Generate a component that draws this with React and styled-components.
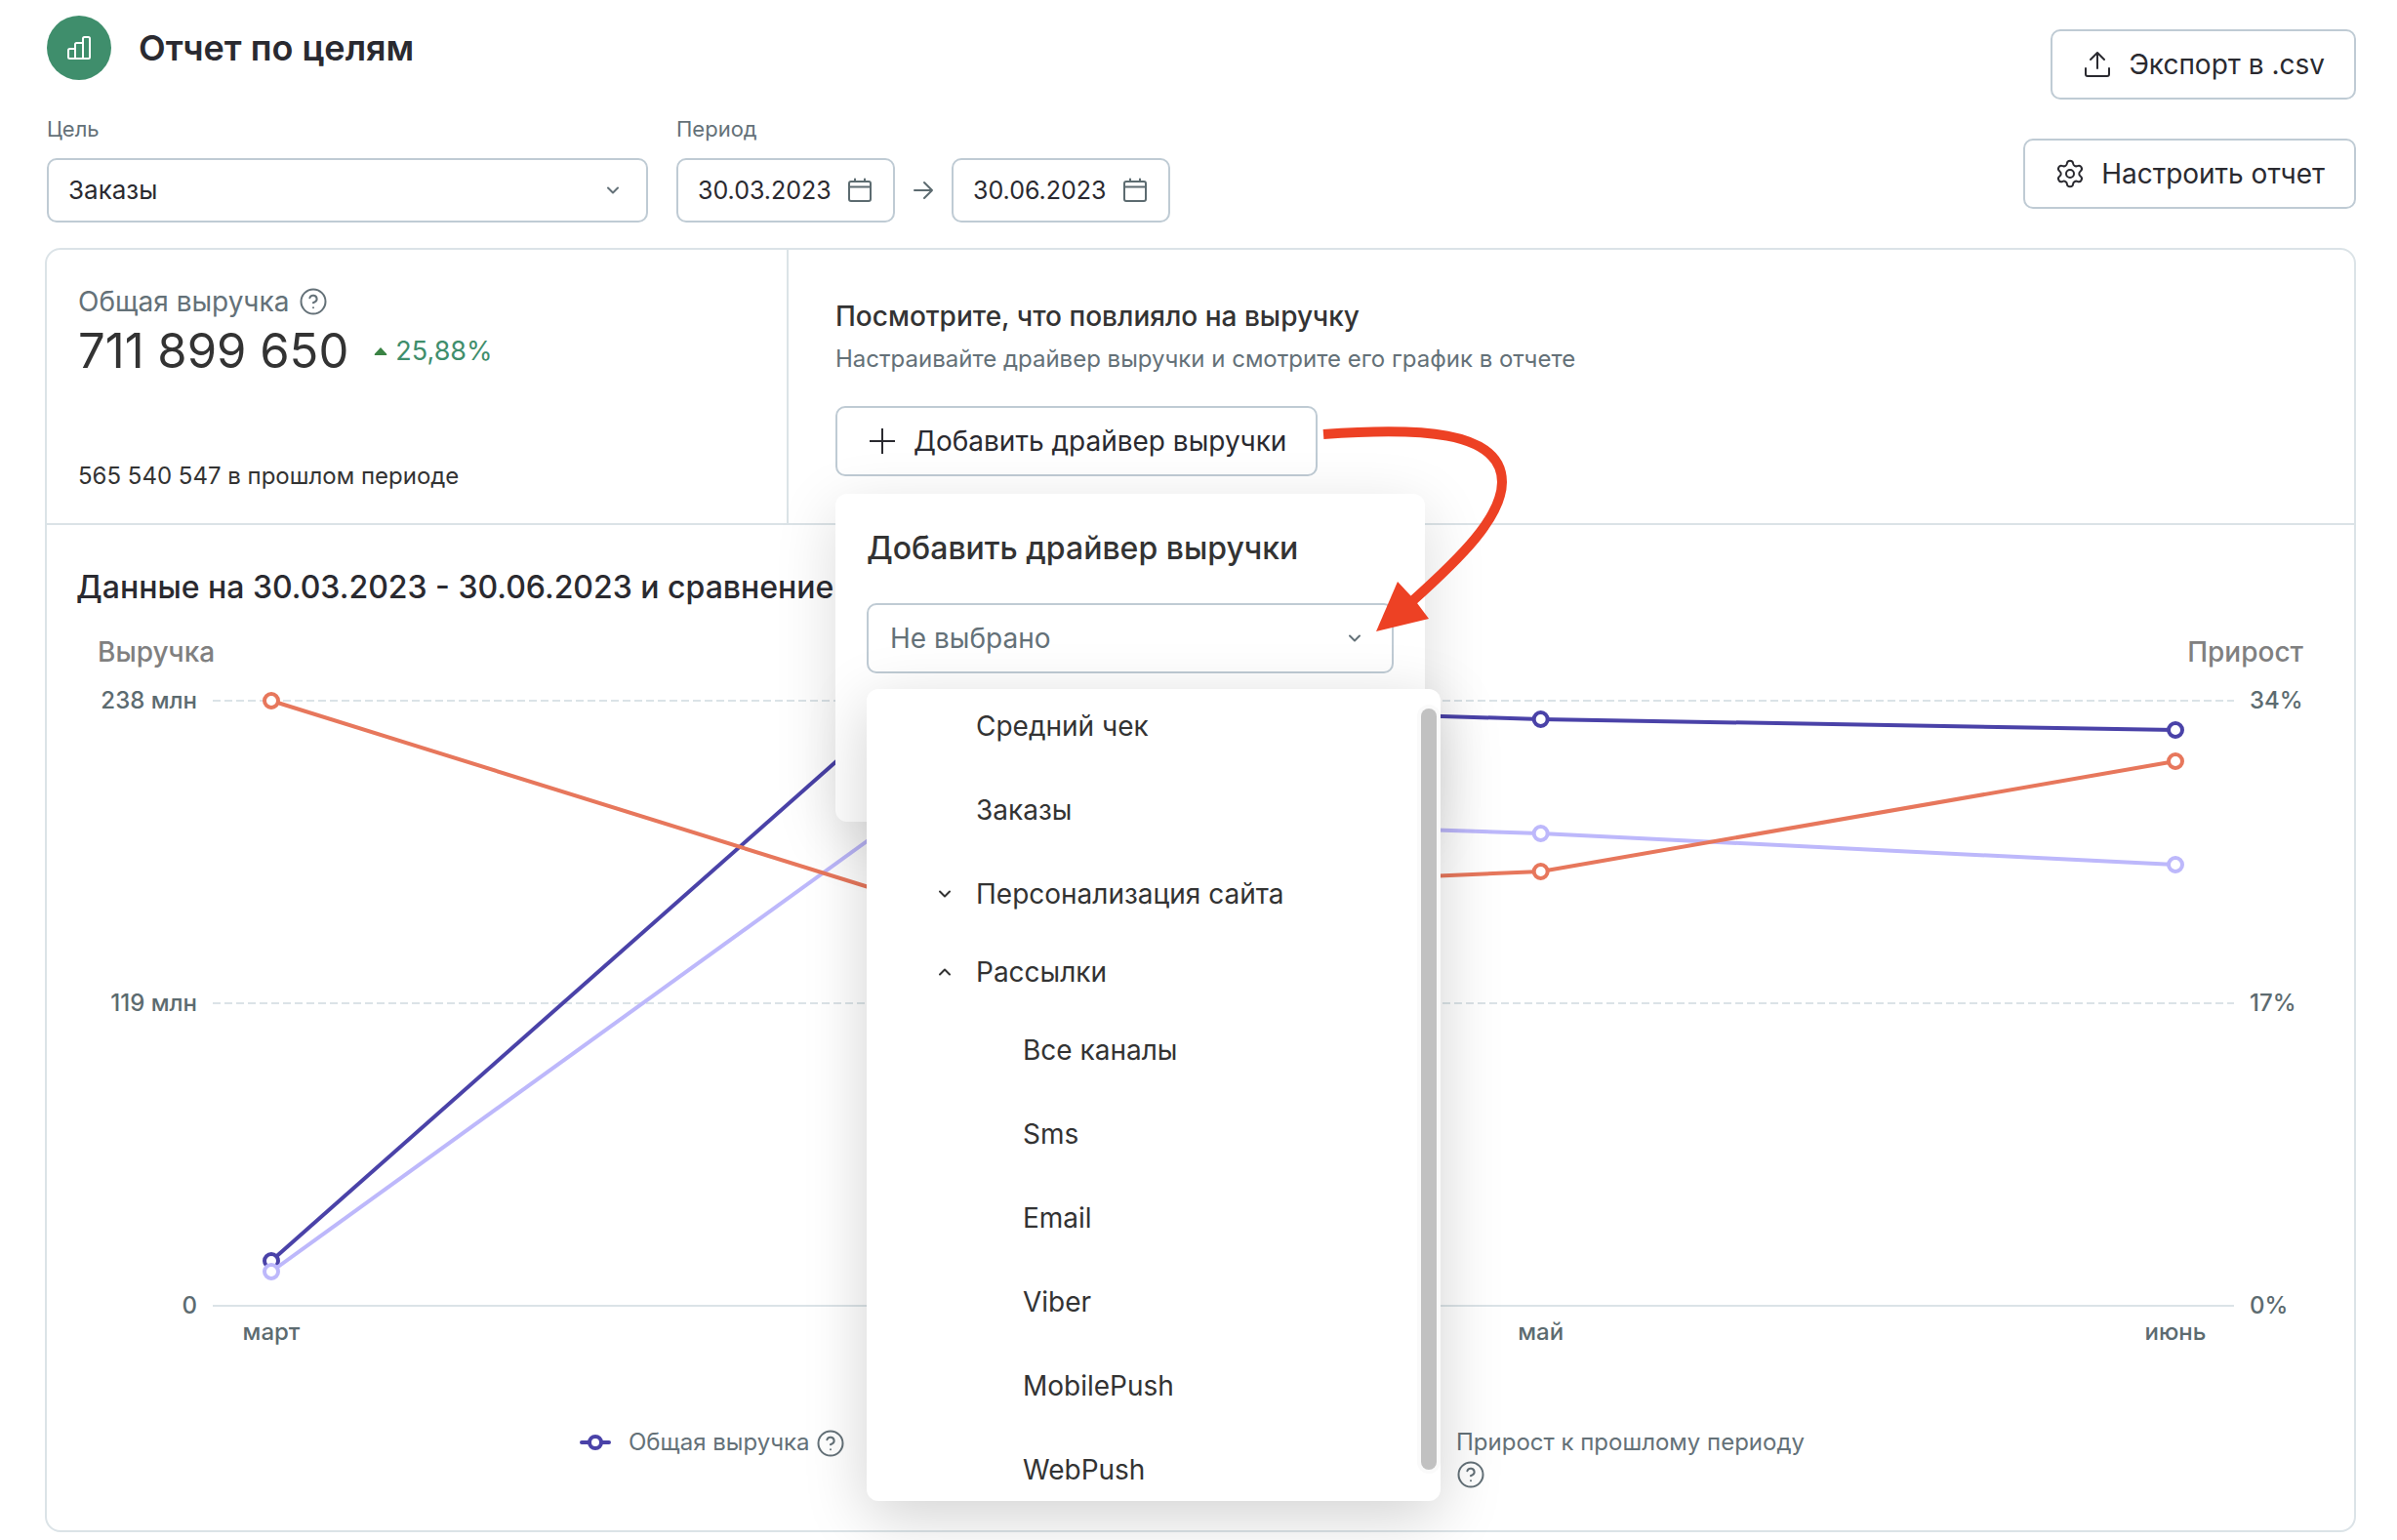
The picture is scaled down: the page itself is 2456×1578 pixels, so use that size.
import React, { useState } from 'react'
import styled, { createGlobalStyle } from 'styled-components'
import { CircleHelp, Settings } from 'lucide-react'

// an empty label keeps the slot of a month that the open menu covers
const months = ['март', '', 'май', 'июнь']

// y positions inside the 650px plot, 15px is the top grid line
const series = [
  { name: 'revenue', color: '#4a42a8', points: [589, 14, 34, 45] },
  { name: 'previous', color: '#bdb8fb', points: [600, 130, 151, 183] },
  { name: 'growth', color: '#e7775c', points: [15, 218, 190, 77] },
]

const drivers = [
  { label: 'Средний чек' },
  { label: 'Заказы' },
  { label: 'Персонализация сайта', group: true },
  { label: 'Рассылки', group: true, open: true },
  { label: 'Все каналы', nested: true },
  { label: 'Sms', nested: true },
  { label: 'Email', nested: true },
  { label: 'Viber', nested: true },
  { label: 'MobilePush', nested: true },
  { label: 'WebPush', nested: true },
]

const percent = (i) => `${(i / (months.length - 1)) * 100}%`

const Chevron = ({ up }) => (
  <svg width="16" height="16" viewBox="0 0 16 16" fill="none" stroke="currentColor" strokeWidth="2" strokeLinecap="round" strokeLinejoin="round" aria-hidden="true">
    <path d={up ? 'M3 10.5l5-5 5 5' : 'M3 5.5l5 5 5-5'} />
  </svg>
)

const CalendarIcon = () => (
  <svg width="28" height="28" viewBox="0 0 28 28" fill="none" stroke="currentColor" strokeWidth="2" strokeLinecap="round" aria-hidden="true">
    <rect x="3" y="5" width="22" height="20" rx="2" />
    <path d="M3 10.5h22M9 2.5v2.5M19 2.5v2.5" />
  </svg>
)

const UploadIcon = () => (
  <svg width="32" height="32" viewBox="0 0 32 32" fill="none" stroke="currentColor" strokeWidth="2" strokeLinecap="round" strokeLinejoin="round" aria-hidden="true">
    <path d="M16 20V4M9 11l7-7 7 7M4 20v6a2 2 0 0 0 2 2h20a2 2 0 0 0 2-2v-6" />
  </svg>
)

const PlusIcon = () => (
  <svg width="32" height="32" viewBox="0 0 32 32" fill="none" stroke="currentColor" strokeWidth="2" aria-hidden="true">
    <path d="M16 3v26M3 16h26" />
  </svg>
)

const ArrowRightIcon = () => (
  <svg width="22" height="22" viewBox="0 0 22 22" fill="none" stroke="currentColor" strokeWidth="2" strokeLinecap="round" strokeLinejoin="round" aria-hidden="true">
    <path d="M2 11h18M12 3l8 8-8 8" />
  </svg>
)

const BarsIcon = () => (
  <svg width="26" height="26" viewBox="0 0 26 26" fill="none" stroke="#fff" strokeWidth="2" strokeLinejoin="round" aria-hidden="true">
    <path d="M9 24H3.500a1.500 1.500 0 0 1-1.500-1.500V15.500A1.500 1.500 0 0 1 3.500 14H9zM9 24V9.500A1.500 1.500 0 0 1 10.500 8H17v16zM17 24V3.500A1.500 1.500 0 0 1 18.500 2h4A1.500 1.500 0 0 1 24 3.500v19a1.500 1.500 0 0 1-1.500 1.500z" />
  </svg>
)

const Help = () => <HelpIcon size={30} strokeWidth={2} absoluteStrokeWidth />

const Chart = () => (
  <Plot>
    <PlotSvg height="650">
      <line x1="0" x2="100%" y1="15" y2="15" stroke="#dbe3e7" strokeWidth="2" strokeDasharray="8 4" />
      <line x1="0" x2="100%" y1="325" y2="325" stroke="#dbe3e7" strokeWidth="2" strokeDasharray="8 4" />
      <line x1="0" x2="100%" y1="635" y2="635" stroke="#dbe3e7" strokeWidth="2" />
    </PlotSvg>
    <Lines>
      <PlotSvg height="650">
        {series.map(({ name, color, points }) => (
          <g key={name} stroke={color}>
            {points.slice(1).map((y, i) => (
              <line key={i} x1={percent(i)} y1={points[i]} x2={percent(i + 1)} y2={y} strokeWidth="4" />
            ))}
            {points.map((y, i) => (
              <circle key={i} cx={percent(i)} cy={y} r="7" fill="#fff" strokeWidth="4" />
            ))}
          </g>
        ))}
      </PlotSvg>
    </Lines>
    <Months>
      {months.map((month, i) => (
        <li key={i}>{month}</li>
      ))}
    </Months>
  </Plot>
)

const LegendItem = ({ color, children }) => (
  <LegendEntry>
    <svg width="32" height="32" viewBox="0 0 32 32" fill="#fff" stroke={color} aria-hidden="true">
      <path d="M2 16h28" strokeWidth="4" strokeLinecap="round" />
      <circle cx="16" cy="16" r="6" strokeWidth="4" />
    </svg>
    {children && (
      <span>
        {children} <Help />
      </span>
    )}
  </LegendEntry>
)

const DriverPicker = () => (
  <Driver>
    <Button type="button">
      <PlusIcon />
      Добавить драйвер выручки
    </Button>
    <Popover>
      <PopoverTitle id="driver-title">Добавить драйвер выручки</PopoverTitle>
      <SelectBox $large>
        <select aria-labelledby="driver-title" defaultValue="">
          <option value="">Не выбрано</option>
        </select>
        <Chevron />
        <Menu>
          <MenuList>
            {drivers.map(({ label, group, open, nested }) => (
              <MenuItem key={label} type="button" $group={group} $nested={nested}>
                {group && <Chevron up={open} />}
                <span>{label}</span>
              </MenuItem>
            ))}
          </MenuList>
          <Thumb />
        </Menu>
      </SelectBox>
    </Popover>
    <Pointer width="200" height="225" viewBox="0 0 200 225" aria-hidden="true">
      <path d="M6 15C100 8 189 10 189 64C189 100 146 142 97 186" fill="none" stroke="#ed4124" strokeWidth="10" />
      <path d="M60 217L82 166L96 181L102 188L114 204Z" fill="#ed4124" />
    </Pointer>
  </Driver>
)

const App = () => {
  const [from, setFrom] = useState('30.03.2023')
  const [to, setTo] = useState('30.06.2023')

  return (
    <Page>
      <GlobalStyle />
      <Header>
        <div>
          <TitleRow>
            <Badge>
              <BarsIcon />
            </Badge>
            <h1>Отчет по целям</h1>
          </TitleRow>
          <Filters>
            <div>
              <Label htmlFor="goal">Цель</Label>
              <SelectBox $goal>
                <select id="goal">
                  <option>Заказы</option>
                </select>
                <Chevron />
              </SelectBox>
            </div>
            <div>
              <Label htmlFor="from">Период</Label>
              <Period>
                <DateBox>
                  <input id="from" value={from} onChange={(e) => setFrom(e.target.value)} />
                  <CalendarIcon />
                </DateBox>
                <ArrowRightIcon />
                <DateBox>
                  <input aria-label="Конец периода" value={to} onChange={(e) => setTo(e.target.value)} />
                  <CalendarIcon />
                </DateBox>
              </Period>
            </div>
          </Filters>
        </div>
        <Actions>
          <Button type="button">
            <UploadIcon />
            Экспорт в .csv
          </Button>
          <Button type="button">
            <Settings size={32} strokeWidth={2} absoluteStrokeWidth />
            Настроить отчет
          </Button>
        </Actions>
      </Header>

      <Card>
        <Summary>
          <Metric>
            <div>
              <MetricName>
                Общая выручка <Help />
              </MetricName>
              <MetricValue>
                <strong>711 899 650</strong>
                <Growth>
                  <svg width="14" height="8" viewBox="0 0 14 8" fill="#3a8344" aria-hidden="true">
                    <path d="M7 0l6 6.500q1 1.500-1 1.500H2q-2 0-1-1.500z" />
                  </svg>
                  25,88%
                </Growth>
              </MetricValue>
            </div>
            <p>565 540 547 в прошлом периоде</p>
          </Metric>
          <Promo>
            <h2>Посмотрите, что повлияло на выручку</h2>
            <p>Настраивайте драйвер выручки и смотрите его график в отчете</p>
            <DriverPicker />
          </Promo>
        </Summary>

        <ChartSection>
          <ChartTitle>Данные на 30.03.2023 - 30.06.2023 и сравнение</ChartTitle>
          <AxisTitles>
            <span>Выручка</span>
            <span>Прирост</span>
          </AxisTitles>
          <ChartRow>
            <Axis $left>
              <span>238 млн</span>
              <span>119 млн</span>
              <span>0</span>
            </Axis>
            <Chart />
            <Axis>
              <span>34%</span>
              <span>17%</span>
              <span>0%</span>
            </Axis>
          </ChartRow>
          <Legend>
            <LegendItem color="#4a42a8">Общая выручка</LegendItem>
            <LegendItem color="#bdb8fb" />
            <LegendItem color="#e7775c">Прирост к прошлому периоду</LegendItem>
          </Legend>
        </ChartSection>
      </Card>
    </Page>
  )
}

const GlobalStyle = createGlobalStyle`
  * {
    box-sizing: border-box;
  }
  body {
    margin: 0;
    background: #fff;
    color: #2a2a30;
    font-family: Inter, 'Noto Sans', sans-serif;
    font-size: 24px;
    line-height: 32px;
  }
  h1, h2, h3, p, ul {
    margin: 0;
    padding: 0;
    font-weight: 500;
  }
  p {
    font-weight: 400;
  }
  svg {
    flex: none;
  }
  button, input, select {
    font: inherit;
    color: inherit;
  }
`

const Page = styled.main`
  padding: 16px 42px 8px 46px;
`

const Header = styled.header`
  display: flex;
  justify-content: space-between;
  padding-left: 2px;
  margin-bottom: 26px;
`

const TitleRow = styled.div`
  display: flex;
  align-items: center;
  gap: 28px;
  margin-bottom: 36px;
  h1 {
    font-size: 36px;
    font-weight: 600;
    line-height: 44px;
  }
`

const Badge = styled.span`
  display: flex;
  align-items: center;
  justify-content: center;
  width: 66px;
  height: 66px;
  border-radius: 50%;
  background: #3f8e6c;
`

const Filters = styled.div`
  display: flex;
  gap: 29px;
`

const Label = styled.label`
  display: block;
  margin-bottom: 16px;
  color: #647178;
  font-size: 22px;
  line-height: 28px;
`

const SelectBox = styled.div`
  position: relative;
  width: ${({ $goal }) => ($goal ? '616px' : '100%')};
  color: #647178;
  select {
    display: block;
    width: 100%;
    height: ${({ $large }) => ($large ? '72px' : '66px')};
    padding: 0 60px 0 ${({ $large }) => ($large ? '22px' : '20px')};
    border: 2px solid #bfcbd4;
    border-radius: 10px;
    background: none;
    color: ${({ $large }) => ($large ? '#647178' : '#2a2a30')};
    font-size: ${({ $large }) => ($large ? '28px' : '26px')};
    appearance: none;
  }
  > svg {
    position: absolute;
    top: ${({ $large }) => ($large ? '28px' : '25px')};
    right: ${({ $large }) => ($large ? '32px' : '28px')};
    pointer-events: none;
  }
`

const Period = styled.div`
  display: flex;
  align-items: center;
  gap: 18px;
  color: #5c6b70;
`

const DateBox = styled.div`
  display: flex;
  align-items: center;
  justify-content: space-between;
  width: 224px;
  height: 66px;
  padding: 0 20px;
  border: 2px solid #bfcbd4;
  border-radius: 10px;
  input {
    width: 146px;
    padding: 0;
    border: 0;
    background: none;
    color: #2a2a30;
    font-size: 25px;
  }
`

const Actions = styled.div`
  display: flex;
  flex-direction: column;
  align-items: flex-end;
  gap: 40px;
  padding-top: 14px;
`

const Button = styled.button`
  display: flex;
  align-items: center;
  gap: 16px;
  height: 72px;
  padding: 0 30px;
  border: 2px solid #bfcbd4;
  border-radius: 10px;
  background: #fff;
  font-size: 28px;
  white-space: nowrap;
`

const Card = styled.section`
  border: 2px solid #dbe3e7;
  border-radius: 16px;
`

const Summary = styled.div`
  display: grid;
  grid-template-columns: 760px 1fr;
  border-bottom: 2px solid #dbe3e7;
`

const Metric = styled.div`
  display: flex;
  flex-direction: column;
  justify-content: space-between;
  min-height: 280px;
  padding: 35px 32px 32px;
  border-right: 2px solid #dbe3e7;
  color: #333;
`

const HelpIcon = styled(CircleHelp)`
  vertical-align: middle;
`

const MetricName = styled.div`
  display: flex;
  align-items: center;
  gap: 10px;
  color: #647178;
  font-size: 28px;
  line-height: 36px;
`

const MetricValue = styled.div`
  display: flex;
  align-items: center;
  gap: 26px;
  margin-top: 3px;
  strong {
    font-size: 49px;
    font-weight: 400;
    line-height: 60px;
  }
`

const Growth = styled.span`
  display: flex;
  align-items: center;
  gap: 8px;
  color: #3f8e6c;
  font-size: 27px;
`

const Promo = styled.div`
  padding: 50px 48px 48px;
  color: #333;
  h2 {
    font-size: 28px;
    line-height: 36px;
  }
  p {
    margin: 10px 0 32px;
    color: #647178;
  }
`

const Driver = styled.div`
  position: relative;
  width: max-content;
  > button {
    color: #2a2a30;
  }
`

const Popover = styled.div`
  position: absolute;
  z-index: 1;
  top: 90px;
  left: 0;
  width: 604px;
  height: 336px;
  padding: 36px 32px;
  border-radius: 12px;
  background: #fff;
  box-shadow: 0 16px 64px rgba(0, 0, 0, 0.14);
`

const PopoverTitle = styled.h3`
  margin-bottom: 36px;
  font-size: 32px;
  line-height: 40px;
`

const Menu = styled.div`
  position: absolute;
  top: 88px;
  left: 0;
  width: 588px;
  border-radius: 12px;
  background: #fff;
  box-shadow: 0 16px 64px rgba(0, 0, 0, 0.18);
`

const MenuList = styled.div`
  height: 832px;
  overflow: hidden;
`

const MenuItem = styled.button`
  display: flex;
  align-items: center;
  gap: 24px;
  width: 100%;
  height: 76px;
  margin-bottom: ${({ $group }) => ($group ? '4px' : '10px')};
  padding: 0 0 0 ${({ $group, $nested }) => ($group ? '72px' : $nested ? '160px' : '112px')};
  border: 0;
  background: none;
  color: #333;
  font-size: 28px;
  text-align: left;
`

const Thumb = styled.div`
  position: absolute;
  top: 20px;
  right: 4px;
  bottom: 32px;
  width: 16px;
  border-radius: 8px;
  background: #c1c1c1;
  box-shadow: 0 0 0 4px #fafafa;
`

const Pointer = styled.svg`
  position: absolute;
  z-index: 2;
  top: 14px;
  left: 494px;
  pointer-events: none;
`

const ChartSection = styled.div`
  padding: 44px 0 42px;
`

const ChartTitle = styled.h2`
  padding: 0 30px;
  font-size: 32px;
  line-height: 40px;
`

const AxisTitles = styled.div`
  display: flex;
  justify-content: space-between;
  margin: 28px 0 17px;
  padding: 0 52px;
  color: #808080;
  font-size: 28px;
  font-weight: 500;
  line-height: 36px;
`

const ChartRow = styled.div`
  display: grid;
  grid-template-columns: 170px 1fr 123px;
  color: #5c6b70;
  font-weight: 500;
`

const Axis = styled.div`
  display: flex;
  flex-direction: column;
  justify-content: space-between;
  height: 650px;
  padding: 0 16px;
  line-height: 30px;
  text-align: ${({ $left }) => ($left ? 'right' : 'left')};
`

const Plot = styled.div`
  display: grid;
`

const PlotSvg = styled.svg`
  display: block;
  grid-area: 1 / 1;
  width: 100%;
  overflow: visible;
`

const Lines = styled.div`
  grid-area: 1 / 1;
  padding: 0 60px;
`

const Months = styled.ul`
  display: flex;
  justify-content: space-between;
  line-height: 24px;
  list-style: none;
  li {
    width: 120px;
    text-align: center;
  }
`

const Legend = styled.div`
  display: grid;
  grid-template-columns: repeat(3, 424px);
  justify-content: center;
  margin-top: 85px;
  color: #647178;
`

const LegendEntry = styled.div`
  display: flex;
  gap: 18px;
  min-height: 64px;
`

export default App
